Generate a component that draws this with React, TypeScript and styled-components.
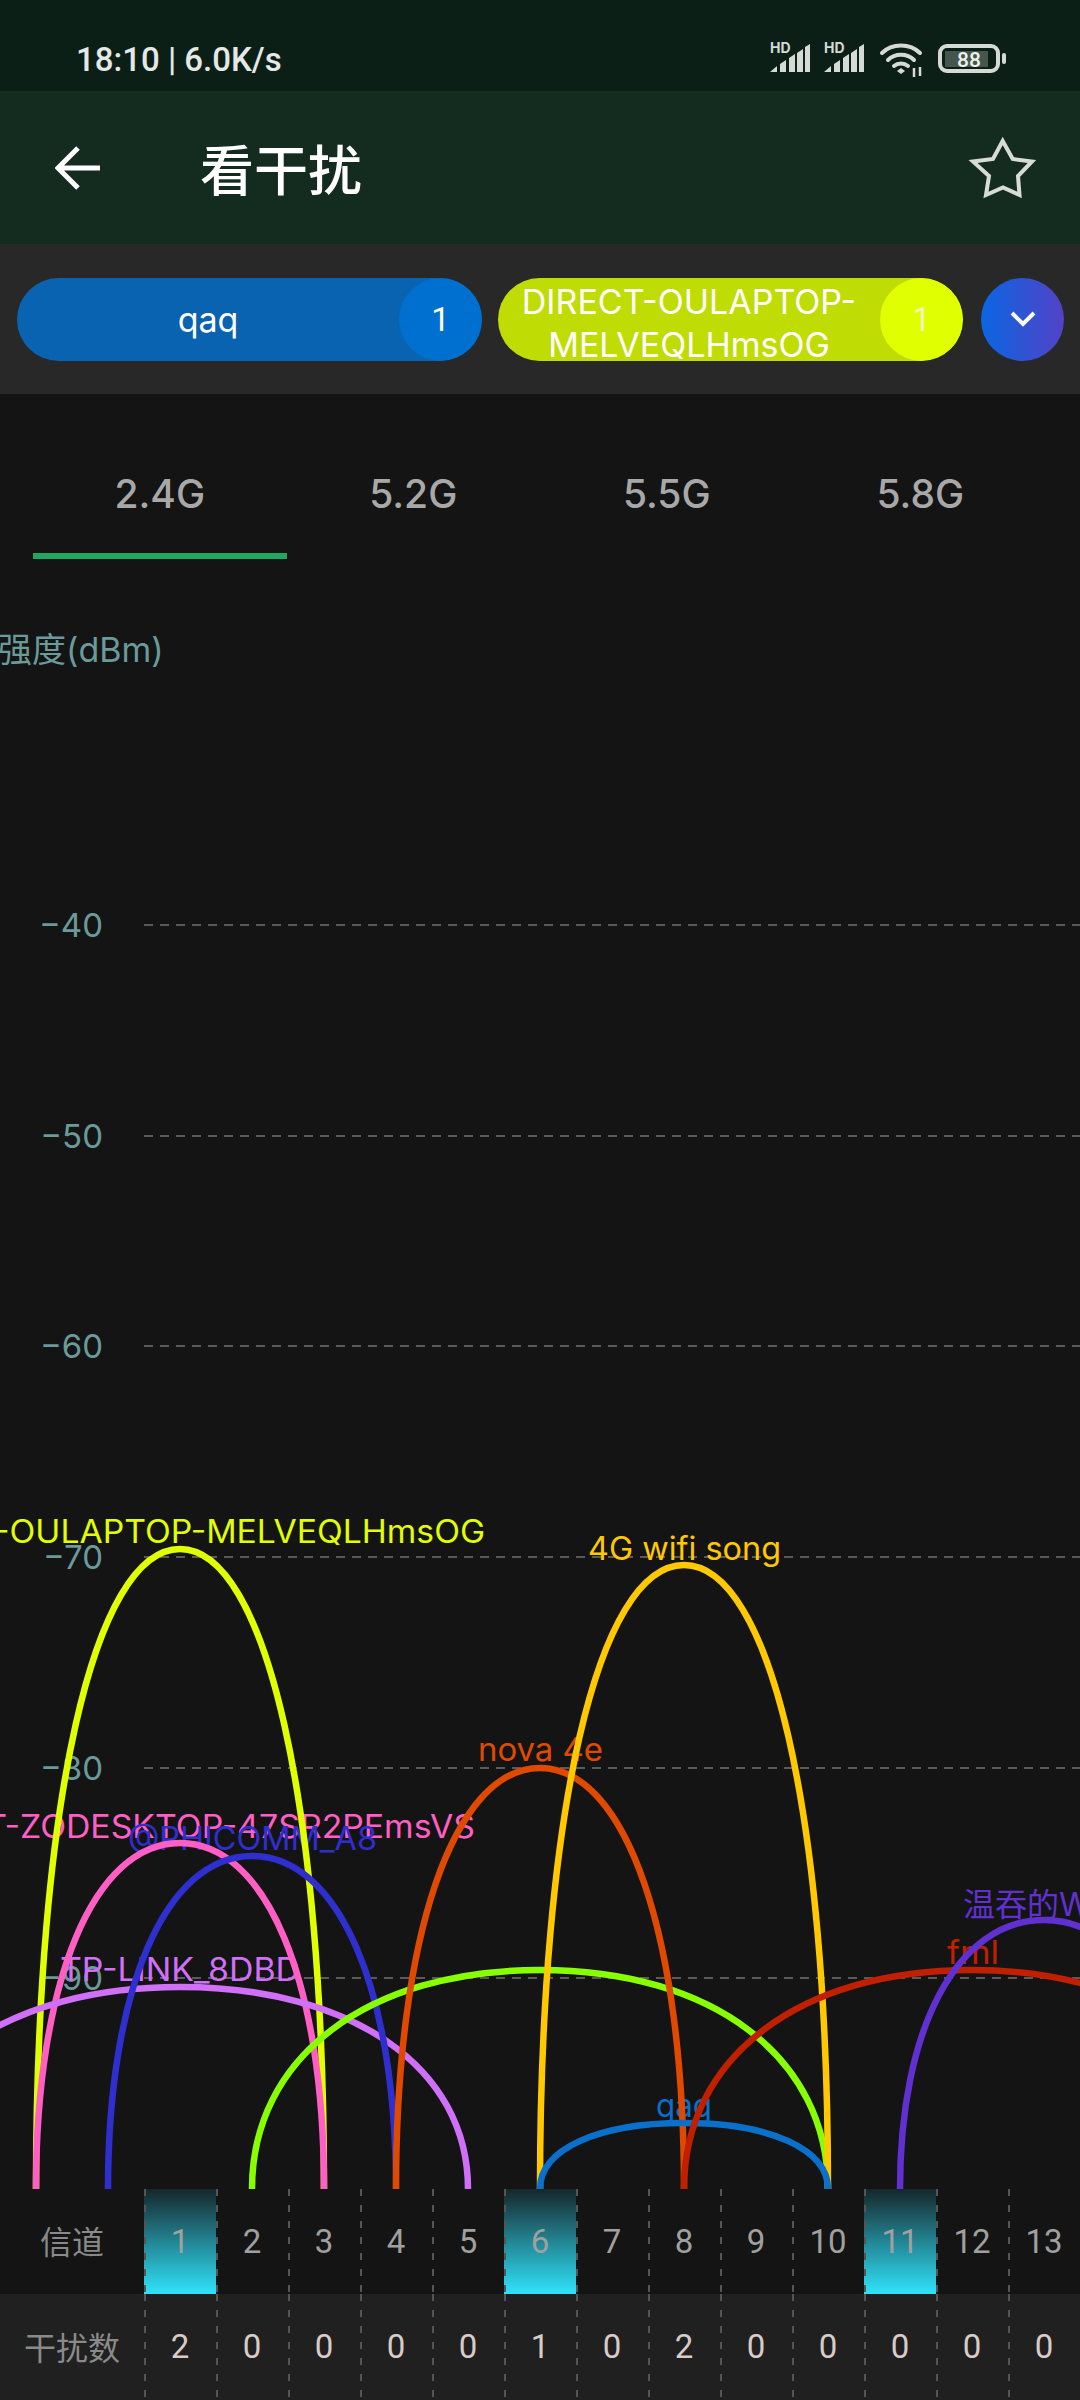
import React from 'react';
import styled, { createGlobalStyle } from 'styled-components';

const GlobalStyle = createGlobalStyle`
  html, body {
    margin: 0;
    padding: 0;
    background: #141414;
  }
`;

const sans = `Inter, "Noto Sans CJK SC", sans-serif`;
const cjk = `"Noto Sans CJK SC", sans-serif`;
const narrow = `Roboto, "Noto Sans CJK SC", sans-serif`;

const Page = styled.div`
  width: 1080px;
  height: 2400px;
  display: flex;
  flex-direction: column;
  overflow: hidden;
  background: #141414;
  font-family: ${sans};
`;

const StatusBar = styled.div`
  height: 91px;
  flex: none;
  display: flex;
  align-items: center;
  justify-content: space-between;
  padding: 27px 74px 0 76px;
  box-sizing: border-box;
  background: #0c1f16;
`;

const StatusText = styled.span`
  font-family: ${narrow};
  font-size: 33px;
  font-weight: 500;
  color: #e4e8e6;
  white-space: pre;
`;

const StatusIcons = styled.svg`
  width: 242px;
  height: 40px;
  display: block;
`;

const AppBar = styled.div`
  height: 153px;
  flex: none;
  display: flex;
  align-items: center;
  padding: 0 44px 0 55px;
  box-sizing: border-box;
  background: #142b20;
`;

const BackIcon = styled.svg`
  width: 46px;
  height: 44px;
  margin-right: 99px;
  display: block;
`;

const Title = styled.h1`
  flex: 1;
  margin: 0;
  font-family: ${cjk};
  font-size: 54px;
  font-weight: 500;
  line-height: 1;
  color: #fff;
`;

const StarIcon = styled.svg`
  width: 68px;
  height: 66px;
  display: block;
`;

const ChipBar = styled.div`
  height: 150px;
  flex: none;
  display: flex;
  align-items: center;
  padding: 0 17px;
  box-sizing: border-box;
  background: #282828;
`;

const Chip = styled.div<{ $bg: string }>`
  width: 465px;
  height: 83px;
  flex: none;
  display: flex;
  align-items: center;
  border-radius: 42px;
  overflow: hidden;
  margin-right: 16px;
  background: ${(p) => p.$bg};
`;

const ChipName = styled.div<{ $twoLines?: boolean }>`
  flex: 1;
  min-width: 0;
  padding-top: ${(p) => (p.$twoLines ? '8px' : '0')};
  text-align: center;
  font-size: 34px;
  line-height: 43px;
  white-space: nowrap;
  color: #fff;
`;

const ChipCount = styled.div<{ $bg: string; $color: string }>`
  width: 83px;
  height: 83px;
  flex: none;
  border-radius: 50%;
  display: flex;
  align-items: center;
  justify-content: center;
  font-family: ${narrow};
  font-size: 33px;
  color: ${(p) => p.$color};
  background: ${(p) => p.$bg};
`;

const MoreButton = styled.div`
  width: 83px;
  height: 83px;
  flex: none;
  margin-left: 2px;
  border-radius: 50%;
  display: flex;
  align-items: center;
  justify-content: center;
  background: linear-gradient(90deg, #0a66e2, #5342c6);
`;

const Tabs = styled.div`
  height: 166px;
  flex: none;
  display: grid;
  grid-template-columns: repeat(4, 253.5px);
  padding: 0 33px;
  box-sizing: border-box;
`;

const Tab = styled.div<{ $active?: boolean }>`
  display: flex;
  align-items: flex-start;
  justify-content: center;
  height: 165px;
  padding-top: 77px;
  box-sizing: border-box;
  font-size: 39px;
  font-weight: 500;
  line-height: 46px;
  color: #a8a8a8;
  border-bottom: 6px solid ${(p) => (p.$active ? '#1fa85f' : 'transparent')};
`;

const Chart = styled.svg`
  width: 1080px;
  height: 1629px;
  flex: none;
  display: block;
`;

const ChannelRow = styled.div<{ $alt?: boolean }>`
  height: ${(p) => (p.$alt ? '106px' : '105px')};
  flex: none;
  display: grid;
  grid-template-columns: 144px repeat(13, 72px);
  background: ${(p) => (p.$alt ? '#202020' : '#141414')};
`;

const RowLabel = styled.div`
  display: flex;
  align-items: center;
  justify-content: center;
  padding-bottom: 3px;
  font-family: ${cjk};
  font-size: 32px;
  color: #8a8a8a;
`;

const tick = 'repeating-linear-gradient(to bottom, #555 0 7px, transparent 7px 16px)';

const Cell = styled.div<{ $active?: boolean; $light?: boolean }>`
  display: flex;
  align-items: center;
  justify-content: center;
  padding-bottom: ${(p) => (p.$light ? '2px' : '0')};
  font-family: ${narrow};
  font-size: 33px;
  color: ${(p) => (p.$light ? '#d8ccc8' : '#a0a0a0')};
  background-image: ${tick}${(p) => (p.$active ? ', linear-gradient(to bottom, #16272b, #2fe3fb)' : '')};
  background-size: 2px 100%${(p) => (p.$active ? ', 100% 100%' : '')};
  background-repeat: no-repeat;
`;

const signalPath = 'M6 33 L13 27 V33 Z M16 33 V25 L22 21 V33 Z M25 33 V19 L31 15 V33 Z M33 33 V14 L39 10 V33 Z M41 33 V8 L46 5 V33 Z';

const Signal = ({ dx }: { dx: number }) => (
  <g fill="#d5dad7" transform={`translate(${dx} 0)`}>
    <text x="6" y="14" fontFamily="Inter, sans-serif" fontSize="14" fontWeight="700">HD</text>
    <path d={signalPath} />
  </g>
);

const StatusGlyphs = () => (
  <StatusIcons viewBox="0 0 242 40">
    <Signal dx={0} />
    <Signal dx={54} />
    <g fill="none" stroke="#d5dad7" strokeWidth="4" strokeLinecap="round">
      <path d="M118 14 C128 4 146 4 156 14" />
      <path d="M124 21 C131 14 143 14 150 21" />
      <path d="M130 27 C134 23.5 140 23.5 144 27" />
    </g>
    <path d="M133 32 L137 29 L141 32 L137 35 Z" fill="#d5dad7" />
    <path d="M150 29 V38 M156 28 V37" stroke="#d5dad7" strokeWidth="2.5" />
    <rect x="176" y="7" width="58" height="25" rx="7" fill="none" stroke="#d5dad7" strokeWidth="4" />
    <rect x="181" y="12" width="43" height="16" fill="#45564d" />
    <rect x="238" y="14" width="4" height="11" rx="2" fill="#d5dad7" />
    <text x="205" y="28" textAnchor="middle" fontFamily="Roboto, sans-serif" fontSize="21" fontWeight="500" fill="#eef1ef">88</text>
  </StatusIcons>
);

const BASE = 2189;

// half-ellipse-ish hump from the channel's span, a bit squarer than a real ellipse
const hump = (cx: number, w: number, top: number) => {
  const h = BASE - top;
  const kx = 0.6 * w;
  const ky = 0.6 * h;
  return `M${cx - w} ${BASE} C${cx - w} ${BASE - ky} ${cx - kx} ${top} ${cx} ${top} C${cx + kx} ${top} ${cx + w} ${BASE - ky} ${cx + w} ${BASE}`;
};

interface Network {
  name: string;
  color: string;
  cx: number;
  w: number;
  top: number;
  labelX: number;
  labelW: number;
  baseline: number;
}

const networks: Network[] = [
  { name: 'DIRECT-OULAPTOP-MELVEQLHmsOG', color: '#e0ff00', cx: 180, w: 144, top: 1549, labelX: -125, labelW: 610, baseline: 1543 },
  { name: 'DIRECT-ZODESKTOP-47SR2PEmsVS', color: '#ff5fc4', cx: 180, w: 144, top: 1843, labelX: -115, labelW: 590, baseline: 1838 },
  { name: 'TP-LINK_8DBD', color: '#d070f8', cx: 180, w: 288, top: 1987, labelX: 60, labelW: 240, baseline: 1981 },
  { name: '@PHICOMM_A8', color: '#2f2fd0', cx: 252, w: 144, top: 1856, labelX: 128, labelW: 249, baseline: 1850 },
  { name: '', color: '#88ff00', cx: 540, w: 288, top: 1970, labelX: 0, labelW: 0, baseline: 0 },
  { name: 'nova 4e', color: '#e04a00', cx: 540, w: 144, top: 1768, labelX: 478, labelW: 125, baseline: 1761 },
  { name: '4G wifi song', color: '#ffc800', cx: 684, w: 144, top: 1565, labelX: 588, labelW: 193, baseline: 1560 },
  { name: 'qaq', color: '#0a70cc', cx: 684, w: 144, top: 2123, labelX: 656, labelW: 56, baseline: 2117 },
  { name: 'fml', color: '#c02000', cx: 972, w: 288, top: 1970, labelX: 947, labelW: 52, baseline: 1964 },
  { name: '温吞的WiFi', color: '#6030d0', cx: 1044, w: 144, top: 1920, labelX: 963, labelW: 162, baseline: 1916 },
];

const levels = [
  { label: '−40', y: 925 },
  { label: '−50', y: 1136 },
  { label: '−60', y: 1346 },
  { label: '−70', y: 1557 },
  { label: '−80', y: 1768 },
  { label: '−90', y: 1978 },
];

const channels = [1, 2, 3, 4, 5, 6, 7, 8, 9, 10, 11, 12, 13];
const counts = [2, 0, 0, 0, 0, 1, 0, 2, 0, 0, 0, 0, 0];

const App = () => {
  return (
    <Page>
      <GlobalStyle />
      <StatusBar>
        <StatusText>18:10 | 6.0K/s</StatusText>
        <StatusGlyphs />
      </StatusBar>
      <AppBar>
        <BackIcon viewBox="0 0 46 44">
          <path d="M23 2 L3 22 L23 42 M3 22 H45" fill="none" stroke="#fff" strokeWidth="5" />
        </BackIcon>
        <Title>看干扰</Title>
        <StarIcon viewBox="0 0 68 66">
          <path d="M34.7 6 L44.7 24 L64 26.5 L50 41 L51.5 60 L35 52.5 L18 60 L21 41 L5 26.5 L25 24 Z" fill="none" stroke="#d8dcd8" strokeWidth="4" />
        </StarIcon>
      </AppBar>
      <ChipBar>
        <Chip $bg="#0a63b0">
          <ChipName>qaq</ChipName>
          <ChipCount $bg="#0070d0" $color="#fff">1</ChipCount>
        </Chip>
        <Chip $bg="#c0dc05">
          <ChipName $twoLines>DIRECT-OULAPTOP-<br />MELVEQLHmsOG</ChipName>
          <ChipCount $bg="#e0ff00" $color="#f2f5b8">1</ChipCount>
        </Chip>
        <MoreButton>
          <svg width="28" height="18" viewBox="0 0 28 18">
            <path d="M3 3 L14 14 L25 3" fill="none" stroke="#fff" strokeWidth="4" />
          </svg>
        </MoreButton>
      </ChipBar>
      <Tabs>
        <Tab $active>2.4G</Tab>
        <Tab>5.2G</Tab>
        <Tab>5.5G</Tab>
        <Tab>5.8G</Tab>
      </Tabs>
      <Chart viewBox="0 560 1080 1629">
        <text x="-2" y="662" fontFamily={sans} fontSize="34" fill="#6a9a9a">强度(dBm)</text>
        {levels.map((l) => (
          <g key={l.label}>
            <line x1="144" x2="1080" y1={l.y} y2={l.y} stroke="#5a5a5a" strokeWidth="2" strokeDasharray="9 7" />
            <text x="103" y={l.y + 12} textAnchor="end" fontFamily={sans} fontSize="33" fill="#6a9a9a">{l.label}</text>
          </g>
        ))}
        {networks.map((n) =>
          n.name ? (
            <text key={n.name} x={n.labelX} y={n.baseline} textLength={n.labelW} lengthAdjust="spacingAndGlyphs" fontFamily={sans} fontSize="32" fill={n.color}>
              {n.name}
            </text>
          ) : null
        )}
        {networks.map((n) => (
          <path key={n.color} d={hump(n.cx, n.w, n.top)} fill="none" stroke={n.color} strokeWidth="6.5" />
        ))}
      </Chart>
      <ChannelRow>
        <RowLabel>信道</RowLabel>
        {channels.map((c) => (
          <Cell key={c} $active={c === 1 || c === 6 || c === 11}>{c}</Cell>
        ))}
      </ChannelRow>
      <ChannelRow $alt>
        <RowLabel>干扰数</RowLabel>
        {counts.map((c, i) => (
          <Cell key={i} $light>{c}</Cell>
        ))}
      </ChannelRow>
    </Page>
  );
};

export default App;
